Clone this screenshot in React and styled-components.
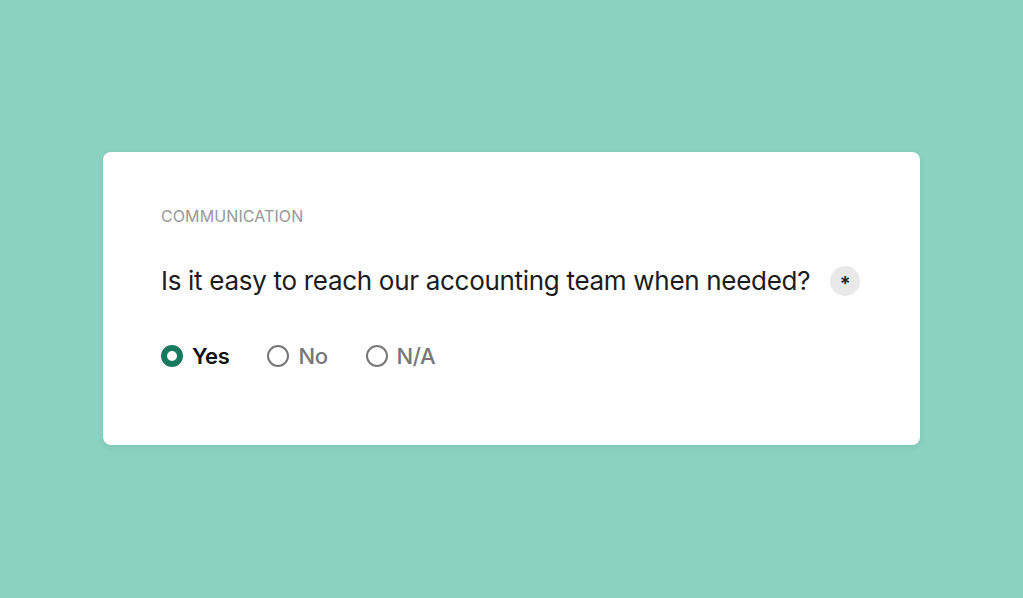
import React, { useState } from "react";
import styled, { createGlobalStyle } from "styled-components";

const GlobalStyle = createGlobalStyle`
  html, body {
    margin: 0;
    padding: 0;
    background: #8bd2c2;
    font-family: Inter, "Noto Sans", sans-serif;
  }
`;

const Page = styled.main`
  width: 1023px;
  height: 598px;
  padding: 152px 103px 0;
  box-sizing: border-box;
`;

const Card = styled.section`
  background: #ffffff;
  border-radius: 8px;
  height: 293px;
  padding: 55px 58px 0;
  box-sizing: border-box;
  box-shadow: 0 2px 6px rgba(0, 60, 50, 0.08);
`;

const Category = styled.div`
  font-size: 16px;
  letter-spacing: 0.1px;
  color: #989898;
  line-height: 18px;
`;

const QuestionRow = styled.div`
  display: flex;
  align-items: center;
  gap: 20px;
  margin-top: 40px;
`;

const Question = styled.h2`
  margin: 0;
  font-size: 26px;
  font-weight: 400;
  letter-spacing: -0.3px;
  color: #1c1c1c;
  line-height: 32px;
`;

const Required = styled.span`
  width: 30px;
  height: 30px;
  border-radius: 50%;
  background: #e9e9e9;
  color: #222;
  font-size: 20px;
  font-weight: 600;
  display: flex;
  align-items: center;
  justify-content: center;
  padding-top: 6px;
  box-sizing: border-box;
`;

const Options = styled.div`
  display: flex;
  gap: 38px;
  margin-top: 46px;
`;

const Option = styled.label`
  display: flex;
  align-items: center;
  gap: 9px;
  cursor: pointer;
  font-size: 22px;
  letter-spacing: -0.4px;
  font-weight: ${(p) => (p.$active ? 600 : 500)};
  color: ${(p) => (p.$active ? "#111" : "#777")};
`;

const Dot = styled.span`
  width: 22px;
  height: 22px;
  border-radius: 50%;
  box-sizing: border-box;
  border: ${(p) => (p.$active ? "6px solid #177a5f" : "2.5px solid #777")};
  background: #fff;
`;

const choices = ["Yes", "No", "N/A"];

export default function App() {
  const [value, setValue] = useState("Yes");
  return (
    <>
      <GlobalStyle />
      <Page>
        <Card>
          <Category>COMMUNICATION</Category>
          <QuestionRow>
            <Question>Is it easy to reach our accounting team when needed?</Question>
            <Required>*</Required>
          </QuestionRow>
          <Options>
            {choices.map((c) => (
              <Option key={c} $active={value === c} onClick={() => setValue(c)}>
                <Dot $active={value === c} />
                {c}
              </Option>
            ))}
          </Options>
        </Card>
      </Page>
    </>
  );
}
